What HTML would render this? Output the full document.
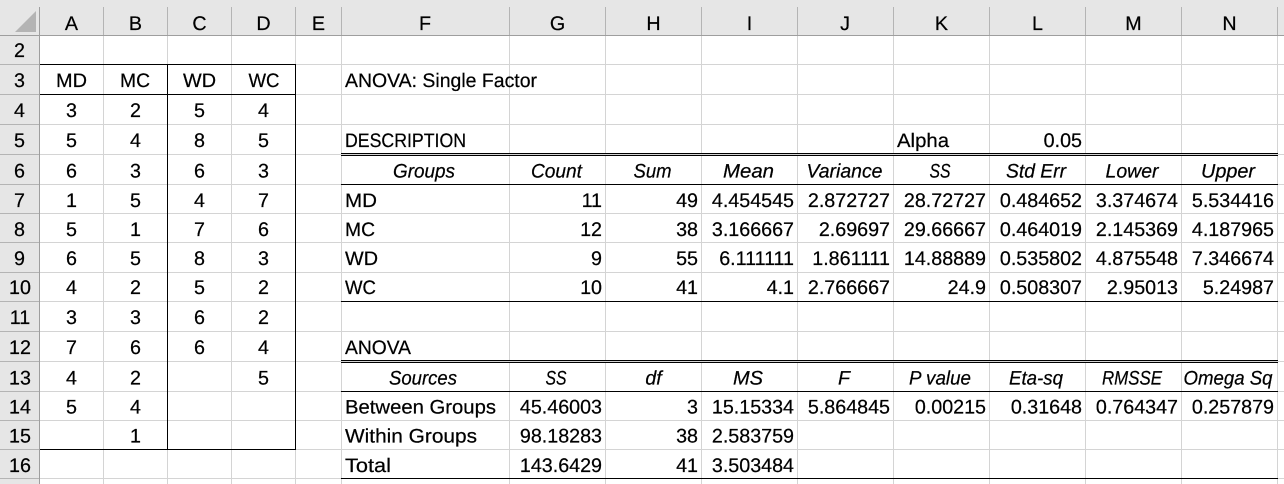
<!DOCTYPE html>
<html><head><meta charset="utf-8"><style>
html,body{margin:0;padding:0;background:#fff}
svg{display:block;font-family:"Liberation Sans",sans-serif;font-size:19.7px;fill:#000;text-rendering:geometricPrecision}
text{stroke:#000;stroke-width:.22px}
.c{text-anchor:middle}.e{text-anchor:end}.i{font-style:italic;text-anchor:middle;font-size:19.5px}.l{font-size:19.5px}
</style></head><body>
<svg width="1284" height="484" viewBox="0 0 1284 484" xmlns="http://www.w3.org/2000/svg">
<rect x="0" y="0" width="1284" height="36" fill="#e6e6e6"/>
<rect x="0" y="36" width="39" height="448" fill="#e6e6e6"/>
<path d="M36 11V32H15Z" fill="#b4b4b4"/>
<g shape-rendering="crispEdges">
<path stroke="#d4d4d4" stroke-width="1" fill="none" d="M40 64.5H1284M40 94.5H1284M40 124.5H1284M40 154.5H1284M40 184.5H1284M40 213.5H1284M40 242.5H1284M40 272.5H1284M40 301.5H1284M40 331.5H1284M40 361.5H1284M40 391.5H1284M40 420.5H1284M40 449.5H1284M40 478.5H1284
M103.5 36V484M167.5 36V484M231.5 36V484M295.5 36V484M341.5 36V484M509.5 36V484M605.5 36V484M701.5 36V484M797.5 36V484M893.5 36V484M989.5 36V484M1085.5 36V484M1181.5 36V484M1277.5 36V484"/>
<path stroke="#b4b4b4" stroke-width="1" fill="none" d="M103.5 7V35M167.5 7V35M231.5 7V35M295.5 7V35M341.5 7V35M509.5 7V35M605.5 7V35M701.5 7V35M797.5 7V35M893.5 7V35M989.5 7V35M1085.5 7V35M1181.5 7V35M1277.5 7V35"/>
<path stroke="#b4b4b4" stroke-width="1" fill="none" d="M0 64.5H39M0 94.5H39M0 124.5H39M0 154.5H39M0 184.5H39M0 213.5H39M0 242.5H39M0 272.5H39M0 301.5H39M0 331.5H39M0 361.5H39M0 391.5H39M0 420.5H39M0 449.5H39M0 478.5H39"/>
<path stroke="#9e9e9e" stroke-width="1" fill="none" d="M0 35.5H1284"/>
<path stroke="#9e9e9e" stroke-width="1" fill="none" d="M39.5 7V484"/>
<path stroke="#000" stroke-width="1" fill="none" d="M40 64.5H295.5V449.5H40M40 94.5H295M167.5 64V450"/>
<path stroke="#000" stroke-width="1" fill="none" d="M341 153.5H1278M341 155.5H1278M341 184.5H1278M341 301.5H1278M341 360.5H1278M341 362.5H1278M341 391.5H1278M341 478.5H1278"/>
</g>

<!-- column headers -->
<g>
<text class="c" x="71.5" y="30">A</text><text class="c" x="135.5" y="30">B</text><text class="c" x="199.5" y="30">C</text><text class="c" x="263.5" y="30">D</text><text class="c" x="318.5" y="30">E</text><text class="c" x="425" y="30">F</text><text class="c" x="557.5" y="30">G</text><text class="c" x="653.5" y="30">H</text><text class="c" x="749.5" y="30">I</text><text class="c" x="845" y="30">J</text><text class="c" x="941.5" y="30">K</text><text class="c" x="1037.5" y="30">L</text><text class="c" x="1133.5" y="30">M</text><text class="c" x="1229.5" y="30">N</text>
</g>
<!-- row headers -->
<g>
<text class="c" x="19.5" y="57">2</text><text class="c" x="19.5" y="87">3</text><text class="c" x="19.5" y="117">4</text><text class="c" x="19.5" y="147">5</text><text class="c" x="19.5" y="177.5">6</text><text class="c" x="19.5" y="207">7</text><text class="c" x="19.5" y="236">8</text><text class="c" x="19.5" y="265">9</text><text class="c" x="20" y="294">10</text><text class="c" x="20" y="324">11</text><text class="c" x="20" y="354">12</text><text class="c" x="20" y="384.5">13</text><text class="c" x="20" y="413.5">14</text><text class="c" x="20" y="442.5">15</text><text class="c" x="20" y="472">16</text>
</g>

<!-- left table -->
<text class="c l" x="71.5" y="87" textLength="31" lengthAdjust="spacingAndGlyphs">MD</text>
<text class="c l" x="135" y="87" textLength="30" lengthAdjust="spacingAndGlyphs">MC</text>
<text class="c l" x="199.5" y="87" textLength="33" lengthAdjust="spacingAndGlyphs">WD</text>
<text class="c l" x="264" y="87" textLength="31" lengthAdjust="spacingAndGlyphs">WC</text>

<text class="c" x="71.5" y="117">3</text><text class="c" x="135.5" y="117">2</text><text class="c" x="199.5" y="117">5</text><text class="c" x="263.5" y="117">4</text>
<text class="c" x="71.5" y="147">5</text><text class="c" x="135.5" y="147">4</text><text class="c" x="199.5" y="147">8</text><text class="c" x="263.5" y="147">5</text>
<text class="c" x="71.5" y="177.5">6</text><text class="c" x="135.5" y="177.5">3</text><text class="c" x="199.5" y="177.5">6</text><text class="c" x="263.5" y="177.5">3</text>
<text class="c" x="71.5" y="207">1</text><text class="c" x="135.5" y="207">5</text><text class="c" x="199.5" y="207">4</text><text class="c" x="263.5" y="207">7</text>
<text class="c" x="71.5" y="236">5</text><text class="c" x="135.5" y="236">1</text><text class="c" x="199.5" y="236">7</text><text class="c" x="263.5" y="236">6</text>
<text class="c" x="71.5" y="265">6</text><text class="c" x="135.5" y="265">5</text><text class="c" x="199.5" y="265">8</text><text class="c" x="263.5" y="265">3</text>
<text class="c" x="71.5" y="294">4</text><text class="c" x="135.5" y="294">2</text><text class="c" x="199.5" y="294">5</text><text class="c" x="263.5" y="294">2</text>
<text class="c" x="71.5" y="324">3</text><text class="c" x="135.5" y="324">3</text><text class="c" x="199.5" y="324">6</text><text class="c" x="263.5" y="324">2</text>
<text class="c" x="71.5" y="354">7</text><text class="c" x="135.5" y="354">6</text><text class="c" x="199.5" y="354">6</text><text class="c" x="263.5" y="354">4</text>
<text class="c" x="71.5" y="384.5">4</text><text class="c" x="135.5" y="384.5">2</text><text class="c" x="263.5" y="384.5">5</text>
<text class="c" x="71.5" y="413.5">5</text><text class="c" x="135.5" y="413.5">4</text>
<text class="c" x="135.5" y="442.5">1</text>

<!-- labels -->
<text class="l" x="345" y="87" textLength="192" lengthAdjust="spacingAndGlyphs">ANOVA: Single Factor</text>
<text class="l" x="345" y="147" textLength="121" lengthAdjust="spacingAndGlyphs">DESCRIPTION</text>
<text class="l" x="897" y="147" textLength="52" lengthAdjust="spacingAndGlyphs">Alpha</text>
<text class="e" x="1082" y="147">0.05</text>

<text class="i" x="424" y="177.5" textLength="62" lengthAdjust="spacingAndGlyphs">Groups</text>
<text class="i" x="556.5" y="177.5" textLength="51" lengthAdjust="spacingAndGlyphs">Count</text>
<text class="i" x="652.5" y="177.5" textLength="38" lengthAdjust="spacingAndGlyphs">Sum</text>
<text class="i" x="748.5" y="177.5" textLength="51" lengthAdjust="spacingAndGlyphs">Mean</text>
<text class="i" x="844.5" y="177.5" textLength="76" lengthAdjust="spacingAndGlyphs">Variance</text>
<text class="i" x="940" y="177.5" textLength="21" lengthAdjust="spacingAndGlyphs">SS</text>
<text class="i" x="1036" y="177.5" textLength="60" lengthAdjust="spacingAndGlyphs">Std Err</text>
<text class="i" x="1132" y="177.5" textLength="53" lengthAdjust="spacingAndGlyphs">Lower</text>
<text class="i" x="1228" y="177.5" textLength="54" lengthAdjust="spacingAndGlyphs">Upper</text>

<text class="l" x="345" y="207" textLength="32" lengthAdjust="spacingAndGlyphs">MD</text>
<text class="e" x="602" y="207">11</text><text class="e" x="698" y="207">49</text><text class="e" x="794" y="207">4.454545</text><text class="e" x="890" y="207">2.872727</text><text class="e" x="986" y="207">28.72727</text><text class="e" x="1082" y="207">0.484652</text><text class="e" x="1178" y="207">3.374674</text><text class="e" x="1274" y="207">5.534416</text>

<text class="l" x="345" y="236" textLength="30" lengthAdjust="spacingAndGlyphs">MC</text>
<text class="e" x="602" y="236">12</text><text class="e" x="698" y="236">38</text><text class="e" x="794" y="236">3.166667</text><text class="e" x="890" y="236">2.69697</text><text class="e" x="986" y="236">29.66667</text><text class="e" x="1082" y="236">0.464019</text><text class="e" x="1178" y="236">2.145369</text><text class="e" x="1274" y="236">4.187965</text>

<text class="l" x="345" y="265" textLength="33" lengthAdjust="spacingAndGlyphs">WD</text>
<text class="e" x="602" y="265">9</text><text class="e" x="698" y="265">55</text><text class="e" x="794" y="265">6.111111</text><text class="e" x="890" y="265">1.861111</text><text class="e" x="986" y="265">14.88889</text><text class="e" x="1082" y="265">0.535802</text><text class="e" x="1178" y="265">4.875548</text><text class="e" x="1274" y="265">7.346674</text>

<text class="l" x="345" y="294" textLength="31" lengthAdjust="spacingAndGlyphs">WC</text>
<text class="e" x="602" y="294">10</text><text class="e" x="698" y="294">41</text><text class="e" x="794" y="294">4.1</text><text class="e" x="890" y="294">2.766667</text><text class="e" x="986" y="294">24.9</text><text class="e" x="1082" y="294">0.508307</text><text class="e" x="1178" y="294">2.95013</text><text class="e" x="1274" y="294">5.24987</text>

<text class="l" x="345" y="354" textLength="66" lengthAdjust="spacingAndGlyphs">ANOVA</text>

<text class="i" x="423" y="384.5" textLength="68" lengthAdjust="spacingAndGlyphs">Sources</text>
<text class="i" x="556" y="384.5" textLength="21" lengthAdjust="spacingAndGlyphs">SS</text>
<text class="i" x="653.5" y="384.5">df</text>
<text class="i" x="748" y="384.5" textLength="30" lengthAdjust="spacingAndGlyphs">MS</text>
<text class="i" x="844" y="384.5" textLength="12" lengthAdjust="spacingAndGlyphs">F</text>
<text class="i" x="940" y="384.5" textLength="62" lengthAdjust="spacingAndGlyphs">P value</text>
<text class="i" x="1036" y="384.5" textLength="54" lengthAdjust="spacingAndGlyphs">Eta-sq</text>
<text class="i" x="1132" y="384.5" textLength="60" lengthAdjust="spacingAndGlyphs">RMSSE</text>
<text class="i" x="1228" y="384.5" textLength="89" lengthAdjust="spacingAndGlyphs">Omega Sq</text>

<text class="l" x="345" y="413.5" textLength="151" lengthAdjust="spacingAndGlyphs">Between Groups</text>
<text class="e" x="602" y="413.5">45.46003</text><text class="e" x="698" y="413.5">3</text><text class="e" x="794" y="413.5">15.15334</text><text class="e" x="890" y="413.5">5.864845</text><text class="e" x="986" y="413.5">0.00215</text><text class="e" x="1082" y="413.5">0.31648</text><text class="e" x="1178" y="413.5">0.764347</text><text class="e" x="1274" y="413.5">0.257879</text>

<text class="l" x="345" y="442.5" textLength="132" lengthAdjust="spacingAndGlyphs">Within Groups</text>
<text class="e" x="602" y="442.5">98.18283</text><text class="e" x="698" y="442.5">38</text><text class="e" x="794" y="442.5">2.583759</text>

<text class="l" x="345" y="472" textLength="46" lengthAdjust="spacingAndGlyphs">Total</text>
<text class="e" x="602" y="472">143.6429</text><text class="e" x="698" y="472">41</text><text class="e" x="794" y="472">3.503484</text>
</svg>
</body></html>
